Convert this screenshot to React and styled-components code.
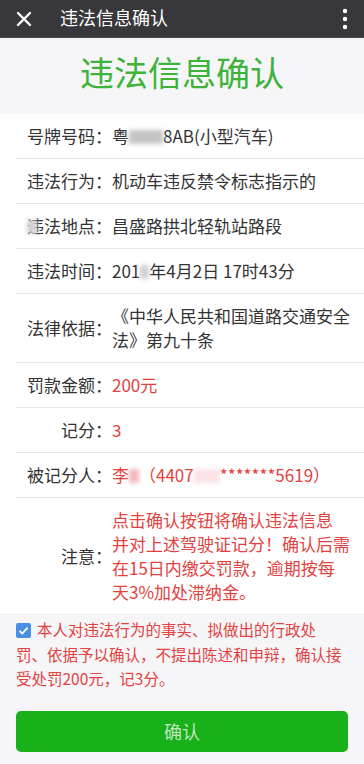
import React, { useState } from "react";
import styled, { createGlobalStyle } from "styled-components";

const GlobalStyle = createGlobalStyle`
  html, body {
    margin: 0;
    padding: 0;
    background: #f6f6f9;
    font-family: "Noto Sans CJK SC", "Noto Sans", sans-serif;
  }
`;

const Page = styled.div`
  width: 364px;
  min-height: 764px;
  background: #f6f6f9;
  overflow: hidden;
`;

const TopBar = styled.div`
  height: 37px;
  background: #38373c;
  border-bottom: 1px solid #4a494f;
  display: flex;
  align-items: center;
  padding: 0 16px;
  color: #fff;

  .title {
    margin-left: 28px;
    font-size: 18px;
    flex: 1;
    line-height: 24px;
    margin-top: -4px;
  }
`;

const Heading = styled.h1`
  margin: 0;
  height: 76px;
  display: flex;
  align-items: center;
  justify-content: center;
  padding-bottom: 10px;
  box-sizing: border-box;
  font-size: 34px;
  font-weight: 400;
  color: #3db33a;
`;

const Card = styled.div`
  background: #fff;
`;

const Row = styled.div`
  display: flex;
  margin-left: 16px;
  padding: 10px 0;
  border-bottom: ${(p) => (p.last ? "none" : "1px solid #e8e8ec")};
  font-size: 17px;
  line-height: 24px;
  color: #333;
`;

const Label = styled.div`
  width: 96px;
  flex-shrink: 0;
  text-align: right;
  align-self: center;
  white-space: nowrap;
`;

const Value = styled.div`
  flex: 1;
  padding-right: 12px;
  color: ${(p) => (p.red ? "#e4423f" : "#333")};
`;

const Blur = styled.span`
  display: inline-block;
  width: ${(p) => p.w}px;
  height: 14px;
  margin: ${(p) => p.m || "0"};
  vertical-align: -1px;
  background: ${(p) => p.color || "#c4c4c6"};
  filter: blur(2px);
`;

const Agree = styled.div`
  border-top: 1px solid #ececf0;
  padding: 2px 16px 0;
  font-size: 15.5px;
  line-height: 24.5px;
  color: #e4423f;
`;

const Check = styled.span`
  display: inline-block;
  width: 15px;
  height: 15px;
  margin-right: 6px;
  vertical-align: -2px;
  border-radius: 2px;
  background: ${(p) => (p.on ? "#4a8fe2" : "#fff")};
  border: ${(p) => (p.on ? "none" : "1px solid #999")};
  cursor: pointer;

  svg {
    display: block;
  }
`;

const Button = styled.button`
  display: block;
  width: 332px;
  height: 41px;
  margin: 20px 16px 0;
  border: none;
  border-radius: 5px;
  background: #19b119;
  color: rgba(255, 255, 255, 0.72);
  font-family: inherit;
  font-size: 18px;
  line-height: 38px;
  padding: 0;
`;

function CloseIcon() {
  return (
    <svg width="16" height="16" viewBox="0 0 16 16">
      <path d="M2 2L14 14M14 2L2 14" stroke="#fff" strokeWidth="2.4" strokeLinecap="round" />
    </svg>
  );
}

function MoreIcon() {
  return (
    <svg width="6" height="22" viewBox="0 0 6 22">
      <circle cx="3" cy="3" r="2.2" fill="#fff" />
      <circle cx="3" cy="11" r="2.2" fill="#fff" />
      <circle cx="3" cy="19" r="2.2" fill="#fff" />
    </svg>
  );
}

export default function App() {
  const [agreed, setAgreed] = useState(true);

  return (
    <Page>
      <GlobalStyle />
      <TopBar>
        <CloseIcon />
        <span className="title">违法信息确认</span>
        <MoreIcon />
      </TopBar>
      <Heading>违法信息确认</Heading>
      <Card>
        <Row>
          <Label>号牌号码：</Label>
          <Value>
            粤<Blur w={34} />8AB(小型汽车)
          </Value>
        </Row>
        <Row>
          <Label>违法行为：</Label>
          <Value>机动车违反禁令标志指示的</Value>
        </Row>
        <Row>
          <Label>
            <Blur w={10} m="0 -10px 0 0" color="#d4d4d6" />
            违法地点：
          </Label>
          <Value>昌盛路拱北轻轨站路段</Value>
        </Row>
        <Row>
          <Label>违法时间：</Label>
          <Value>
            201<Blur w={9} color="#d0d0d2" />年4月2日 17时43分
          </Value>
        </Row>
        <Row>
          <Label>法律依据：</Label>
          <Value>《中华人民共和国道路交通安全法》第九十条</Value>
        </Row>
        <Row>
          <Label>罚款金额：</Label>
          <Value red>200元</Value>
        </Row>
        <Row>
          <Label>记分：</Label>
          <Value red>3</Value>
        </Row>
        <Row>
          <Label>被记分人：</Label>
          <Value red>
            李<Blur w={10} color="#f2b8bd" />（4407<Blur w={26} color="#fbe3e5" />*******5619）
          </Value>
        </Row>
        <Row last>
          <Label>注意：</Label>
          <Value red>
            点击确认按钮将确认违法信息
            <br />
            并对上述驾驶证记分！确认后需
            <br />
            在15日内缴交罚款，逾期按每
            <br />
            天3%加处滞纳金。
          </Value>
        </Row>
      </Card>
      <Agree>
        <Check on={agreed} onClick={() => setAgreed(!agreed)}>
          {agreed && (
            <svg width="15" height="15" viewBox="0 0 15 15">
              <path d="M3.5 7.8L6.3 10.5L11.6 4.6" stroke="#fff" strokeWidth="1.8" fill="none" />
            </svg>
          )}
        </Check>
        本人对违法行为的事实、拟做出的行政处
        <br />
        罚、依据予以确认，不提出陈述和申辩，确认接受处罚200元，记3分。
      </Agree>
      <Button>确认</Button>
    </Page>
  );
}
